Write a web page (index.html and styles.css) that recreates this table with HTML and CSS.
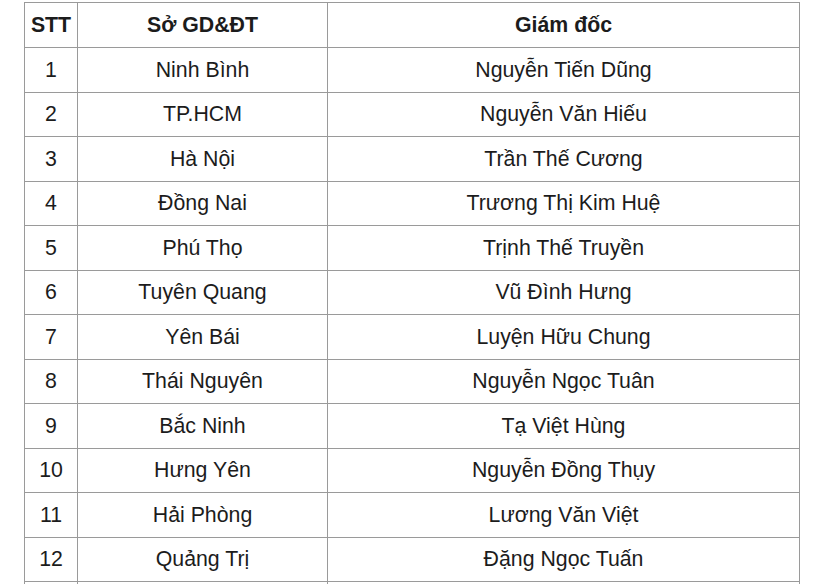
FILE: index.html
```html
<!DOCTYPE html>
<html lang="vi">
<head>
<meta charset="utf-8">
<link rel="stylesheet" href="styles.css">
</head>
<body>
<table class="list">
  <colgroup>
    <col class="c1"><col class="c2"><col class="c3">
  </colgroup>
  <thead>
    <tr><th>STT</th><th>Sở GD&amp;ĐT</th><th>Giám đốc</th></tr>
  </thead>
  <tbody>
    <tr><td>1</td><td>Ninh Bình</td><td>Nguyễn Tiến Dũng</td></tr>
    <tr><td>2</td><td>TP.HCM</td><td>Nguyễn Văn Hiếu</td></tr>
    <tr><td>3</td><td>Hà Nội</td><td>Trần Thế Cương</td></tr>
    <tr><td>4</td><td>Đồng Nai</td><td>Trương Thị Kim Huệ</td></tr>
    <tr><td>5</td><td>Phú Thọ</td><td>Trịnh Thế Truyền</td></tr>
    <tr><td>6</td><td>Tuyên Quang</td><td>Vũ Đình Hưng</td></tr>
    <tr><td>7</td><td>Yên Bái</td><td>Luyện Hữu Chung</td></tr>
    <tr><td>8</td><td>Thái Nguyên</td><td>Nguyễn Ngọc Tuân</td></tr>
    <tr><td>9</td><td>Bắc Ninh</td><td>Tạ Việt Hùng</td></tr>
    <tr><td>10</td><td>Hưng Yên</td><td>Nguyễn Đồng Thụy</td></tr>
    <tr><td>11</td><td>Hải Phòng</td><td>Lương Văn Việt</td></tr>
    <tr><td>12</td><td>Quảng Trị</td><td>Đặng Ngọc Tuấn</td></tr>
    <tr><td></td><td></td><td></td></tr>
  </tbody>
</table>
</body>
</html>
```
FILE: styles.css
```css
html, body {
  margin: 0;
  padding: 0;
  background: #fff;
}
body {
  padding: 2px 0 0 24px;
  font-family: "Liberation Sans", Arial, sans-serif;
  color: #1c1c1c;
  overflow: hidden;
}
.list {
  border-collapse: collapse;
  table-layout: fixed;
  width: 775px;
}
.c1 { width: 53px; }
.c2 { width: 250px; }
.c3 { width: 472px; }
.list th,
.list td {
  border: 1px solid #9a9a9a;
  text-align: center;
  vertical-align: middle;
  font-size: 21.3px;
  padding: 0;
  height: 43.5px;
  line-height: 24px;
}
.list th {
  font-weight: bold;
  height: 44px;
}
```
